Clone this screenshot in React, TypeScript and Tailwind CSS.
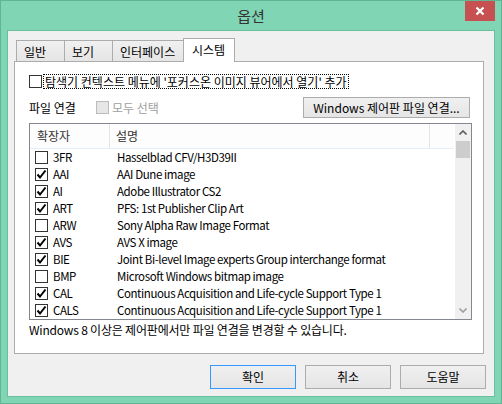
import React from "react";

const rows: [string, string, boolean][] = [
  ["3FR", "Hasselblad CFV/H3D39II", false],
  ["AAI", "AAI Dune image", true],
  ["AI", "Adobe Illustrator CS2", true],
  ["ART", "PFS: 1st Publisher Clip Art", true],
  ["ARW", "Sony Alpha Raw Image Format", false],
  ["AVS", "AVS X image", true],
  ["BIE", "Joint Bi-level Image experts Group interchange format", true],
  ["BMP", "Microsoft Windows bitmap image", false],
  ["CAL", "Continuous Acquisition and Life-cycle Support Type 1", true],
  ["CALS", "Continuous Acquisition and Life-cycle Support Type 1", true],
];

const CheckBox = ({ checked, disabled }: { checked?: boolean; disabled?: boolean }) => (
  <div
    className={
      disabled
        ? "w-[13px] h-[13px] shrink-0 border border-[#bcbcbc] bg-[#e6e6e6]"
        : "w-[13px] h-[13px] shrink-0 border border-[#333333] bg-white flex items-center justify-center"
    }
  >
    {checked && (
      <svg width="11" height="11" viewBox="0 0 11 11">
        <path d="M1.5 5.5 L4 8.5 L9.5 1.5" fill="none" stroke="#000" strokeWidth="2" />
      </svg>
    )}
  </div>
);

const Button = ({ label, primary, className }: { label: string; primary?: boolean; className: string }) => (
  <div
    className={`${className} flex items-center justify-center border bg-gradient-to-b from-[#f0f0f0] to-[#e5e5e5] text-[12px] text-black ${
      primary ? "border-[#3399ff]" : "border-[#acacac]"
    }`}
  >
    {label}
  </div>
);

export default function App() {
  return (
    <div
      className="relative w-[502px] h-[404px] border border-[#5fb594] bg-[#80d6b4] flex flex-col overflow-hidden"
      style={{ fontFamily: '"Noto Sans CJK KR", "Noto Sans", sans-serif' }}
    >
      {/* title bar */}
      <div className="h-[29px] flex items-center justify-center text-[15px] text-[#333333] pt-[1px]">옵션</div>
      <div className="absolute top-0 right-[6px] w-[30px] h-[20px] bg-[#c75050] flex items-center justify-center">
        <svg width="10" height="10" viewBox="0 0 10 10">
          <path d="M1.5 1.5 L8.5 8.5 M8.5 1.5 L1.5 8.5" stroke="#fff" strokeWidth="2.2" />
        </svg>
      </div>

      {/* client area */}
      <div className="ml-[6px] w-[488px] h-[367px] border border-[#6bbf9e] bg-[#f0f0f0] flex flex-col">
        {/* tabs */}
        <div className="h-[30px] pl-[8px] flex items-end text-[12px] text-black leading-none">
          <div className="w-[49px] h-[21px] border border-b-0 border-[#acacac] bg-gradient-to-b from-[#f0f0f0] to-[#e5e5e5] pl-[7px] pt-[5px]">일반</div>
          <div className="w-[48px] h-[21px] border border-l-0 border-b-0 border-[#acacac] bg-gradient-to-b from-[#f0f0f0] to-[#e5e5e5] pl-[7px] pt-[5px]">보기</div>
          <div className="w-[71px] h-[21px] border border-l-0 border-b-0 border-[#acacac] bg-gradient-to-b from-[#f0f0f0] to-[#e5e5e5] pl-[7px] pt-[5px]">인터페이스</div>
          <div className="relative z-10 -ml-[1px] -mb-[1px] w-[52px] h-[24px] border border-b-0 border-[#acacac] bg-white pl-[8px] pt-[5px]">시스템</div>
        </div>

        {/* panel */}
        <div className="ml-[6px] w-[470px] h-[293px] border border-[#acacac] bg-white flex flex-col px-[14px] text-[12px] text-black">
          <div className="mt-[12px] flex items-center h-[15px]">
            <CheckBox />
            <div className="ml-[1px] h-[15px] flex items-center border border-dotted border-black px-[1px] leading-none">
              탐색기 컨텍스트 메뉴에 '포커스온 이미지 뷰어에서 열기' 추가
            </div>
          </div>

          <div className="mt-[8px] h-[21px] flex items-center">
            <span className="w-[67px]">파일 연결</span>
            <CheckBox disabled />
            <span className="ml-[3px] text-[#a0a0a0]">모두 선택</span>
            <Button label="Windows 제어판 파일 연결..." className="ml-auto mr-[-1px] w-[167px] h-[21px]" />
          </div>

          {/* list view */}
          <div className="mt-[5px] w-[443px] h-[197px] border border-[#828790] flex bg-white">
            <div className="flex-1 flex flex-col">
              <div className="h-[25px] flex items-center border-b border-[#e5eefa] bg-[#fdfdfd] text-[#333333]">
                <div className="w-[80px] h-full flex items-center pl-[7px] border-r border-[#e5e5e5]">확장자</div>
                <div className="w-[320px] h-full flex items-center pl-[6px] border-r border-[#e5e5e5]">설명</div>
              </div>
              <div className="flex-1 bg-white">
                {rows.map(([ext, desc, on]) => (
                  <div key={ext} className="h-[17px] flex items-center leading-none text-[11.5px] tracking-[-0.4px]">
                    <div className="w-[80px] flex items-center pl-[5px]">
                      <CheckBox checked={on} />
                      <span className="ml-[5px]">{ext}</span>
                    </div>
                    <div className="pl-[7px] whitespace-nowrap">{desc}</div>
                  </div>
                ))}
              </div>
            </div>
            {/* scrollbar */}
            <div className="w-[17px] bg-[#f0f0f0] flex flex-col border-l border-white">
              <div className="h-[17px] flex items-center justify-center">
                <svg width="8" height="5" viewBox="0 0 8 5">
                  <path d="M0.5 4.5 L4 1 L7.5 4.5" fill="none" stroke="#606060" strokeWidth="1.6" />
                </svg>
              </div>
              <div className="mx-[1px] h-[17px] bg-[#cdcdcd]" />
              <div className="flex-1" />
              <div className="h-[17px] flex items-center justify-center">
                <svg width="8" height="5" viewBox="0 0 8 5">
                  <path d="M0.5 0.5 L4 4 L7.5 0.5" fill="none" stroke="#a0a0a0" strokeWidth="1.6" />
                </svg>
              </div>
            </div>
          </div>

          <div className="mt-[4px] leading-none tracking-[-0.2px]">
            Windows 8 이상은 제어판에서만 파일 연결을 변경할 수 있습니다.
          </div>
        </div>

        {/* dialog buttons */}
        <div className="mt-[11px] flex gap-[9px] pl-[202px]">
          <Button label="확인" primary className="w-[86px] h-[24px]" />
          <Button label="취소" className="w-[86px] h-[24px]" />
          <Button label="도움말" className="w-[86px] h-[24px]" />
        </div>
      </div>
    </div>
  );
}
